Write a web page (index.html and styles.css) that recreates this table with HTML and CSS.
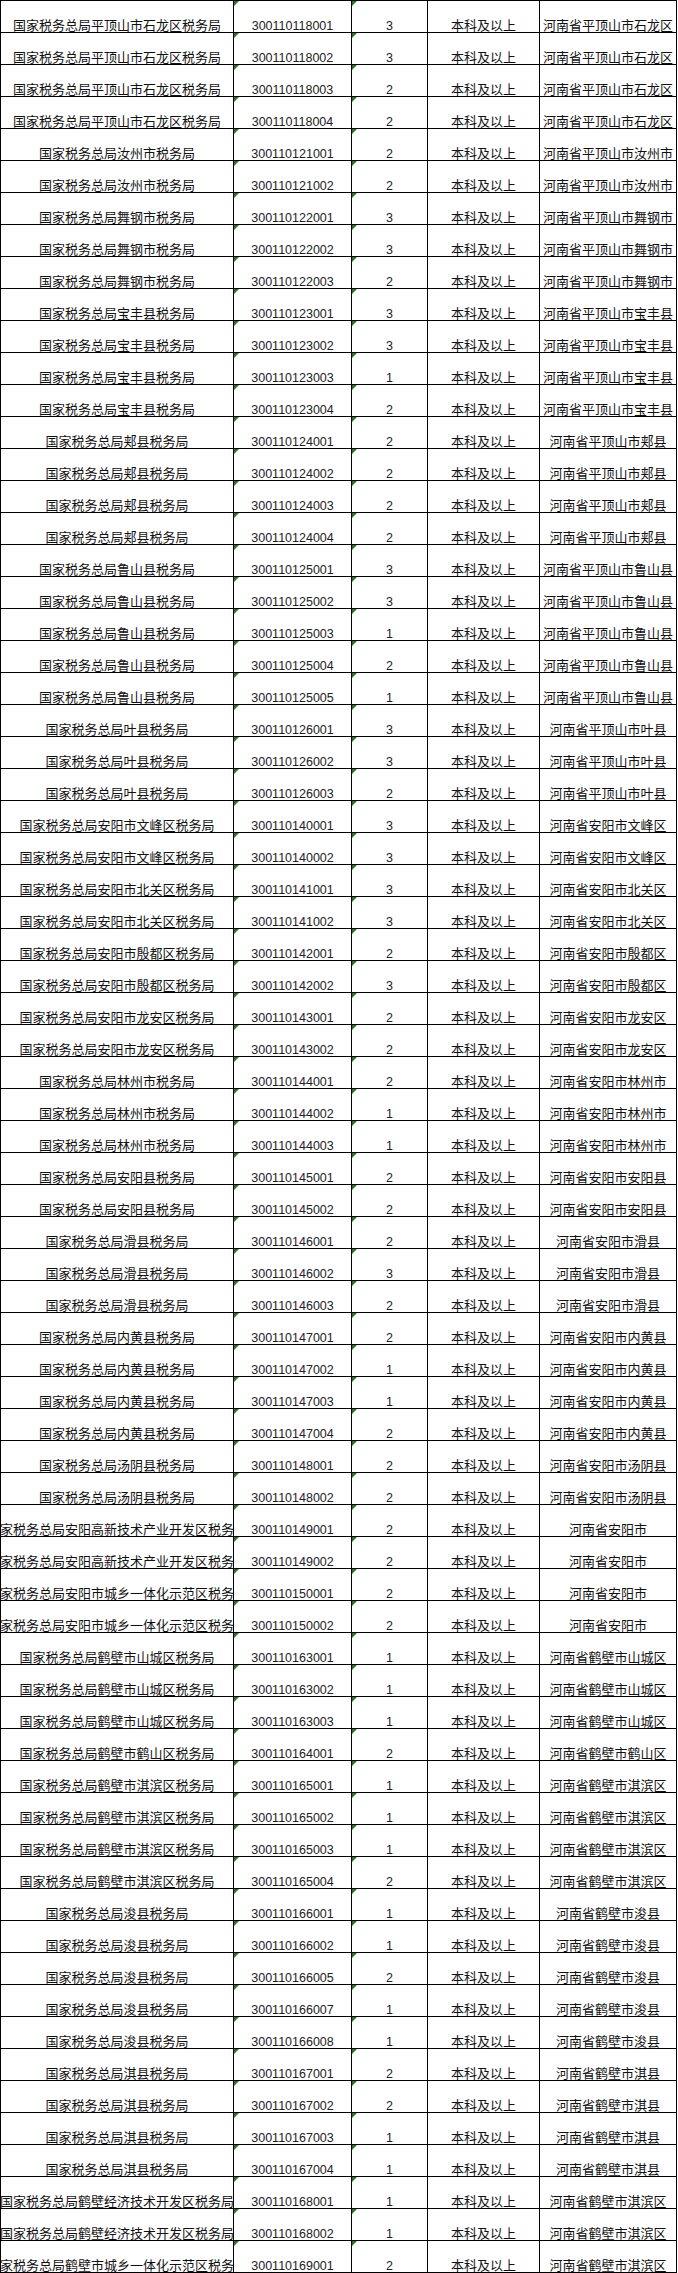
FILE: index.html
```html
<!DOCTYPE html>
<html lang="zh-CN">
<head>
<meta charset="utf-8">
<title>职位表</title>
<link rel="stylesheet" href="styles.css">
</head>
<body>
<div class="sheet">
<div class="row"><div class="c c1"><span>国家税务总局平顶山市石龙区税务局</span></div><div class="c c2 mark"><span>300110118001</span></div><div class="c c3 mark"><span>3</span></div><div class="c c4"><span>本科及以上</span></div><div class="c c5"><span>河南省平顶山市石龙区</span></div></div>
<div class="row"><div class="c c1"><span>国家税务总局平顶山市石龙区税务局</span></div><div class="c c2 mark"><span>300110118002</span></div><div class="c c3 mark"><span>3</span></div><div class="c c4"><span>本科及以上</span></div><div class="c c5"><span>河南省平顶山市石龙区</span></div></div>
<div class="row"><div class="c c1"><span>国家税务总局平顶山市石龙区税务局</span></div><div class="c c2 mark"><span>300110118003</span></div><div class="c c3 mark"><span>2</span></div><div class="c c4"><span>本科及以上</span></div><div class="c c5"><span>河南省平顶山市石龙区</span></div></div>
<div class="row"><div class="c c1"><span>国家税务总局平顶山市石龙区税务局</span></div><div class="c c2 mark"><span>300110118004</span></div><div class="c c3 mark"><span>2</span></div><div class="c c4"><span>本科及以上</span></div><div class="c c5"><span>河南省平顶山市石龙区</span></div></div>
<div class="row"><div class="c c1"><span>国家税务总局汝州市税务局</span></div><div class="c c2 mark"><span>300110121001</span></div><div class="c c3 mark"><span>2</span></div><div class="c c4"><span>本科及以上</span></div><div class="c c5"><span>河南省平顶山市汝州市</span></div></div>
<div class="row"><div class="c c1"><span>国家税务总局汝州市税务局</span></div><div class="c c2 mark"><span>300110121002</span></div><div class="c c3 mark"><span>2</span></div><div class="c c4"><span>本科及以上</span></div><div class="c c5"><span>河南省平顶山市汝州市</span></div></div>
<div class="row"><div class="c c1"><span>国家税务总局舞钢市税务局</span></div><div class="c c2 mark"><span>300110122001</span></div><div class="c c3 mark"><span>3</span></div><div class="c c4"><span>本科及以上</span></div><div class="c c5"><span>河南省平顶山市舞钢市</span></div></div>
<div class="row"><div class="c c1"><span>国家税务总局舞钢市税务局</span></div><div class="c c2 mark"><span>300110122002</span></div><div class="c c3 mark"><span>3</span></div><div class="c c4"><span>本科及以上</span></div><div class="c c5"><span>河南省平顶山市舞钢市</span></div></div>
<div class="row"><div class="c c1"><span>国家税务总局舞钢市税务局</span></div><div class="c c2 mark"><span>300110122003</span></div><div class="c c3 mark"><span>2</span></div><div class="c c4"><span>本科及以上</span></div><div class="c c5"><span>河南省平顶山市舞钢市</span></div></div>
<div class="row"><div class="c c1"><span>国家税务总局宝丰县税务局</span></div><div class="c c2 mark"><span>300110123001</span></div><div class="c c3 mark"><span>3</span></div><div class="c c4"><span>本科及以上</span></div><div class="c c5"><span>河南省平顶山市宝丰县</span></div></div>
<div class="row"><div class="c c1"><span>国家税务总局宝丰县税务局</span></div><div class="c c2 mark"><span>300110123002</span></div><div class="c c3 mark"><span>3</span></div><div class="c c4"><span>本科及以上</span></div><div class="c c5"><span>河南省平顶山市宝丰县</span></div></div>
<div class="row"><div class="c c1"><span>国家税务总局宝丰县税务局</span></div><div class="c c2 mark"><span>300110123003</span></div><div class="c c3 mark"><span>1</span></div><div class="c c4"><span>本科及以上</span></div><div class="c c5"><span>河南省平顶山市宝丰县</span></div></div>
<div class="row"><div class="c c1"><span>国家税务总局宝丰县税务局</span></div><div class="c c2 mark"><span>300110123004</span></div><div class="c c3 mark"><span>2</span></div><div class="c c4"><span>本科及以上</span></div><div class="c c5"><span>河南省平顶山市宝丰县</span></div></div>
<div class="row"><div class="c c1"><span>国家税务总局郏县税务局</span></div><div class="c c2 mark"><span>300110124001</span></div><div class="c c3 mark"><span>2</span></div><div class="c c4"><span>本科及以上</span></div><div class="c c5"><span>河南省平顶山市郏县</span></div></div>
<div class="row"><div class="c c1"><span>国家税务总局郏县税务局</span></div><div class="c c2 mark"><span>300110124002</span></div><div class="c c3 mark"><span>2</span></div><div class="c c4"><span>本科及以上</span></div><div class="c c5"><span>河南省平顶山市郏县</span></div></div>
<div class="row"><div class="c c1"><span>国家税务总局郏县税务局</span></div><div class="c c2 mark"><span>300110124003</span></div><div class="c c3 mark"><span>2</span></div><div class="c c4"><span>本科及以上</span></div><div class="c c5"><span>河南省平顶山市郏县</span></div></div>
<div class="row"><div class="c c1"><span>国家税务总局郏县税务局</span></div><div class="c c2 mark"><span>300110124004</span></div><div class="c c3 mark"><span>2</span></div><div class="c c4"><span>本科及以上</span></div><div class="c c5"><span>河南省平顶山市郏县</span></div></div>
<div class="row"><div class="c c1"><span>国家税务总局鲁山县税务局</span></div><div class="c c2 mark"><span>300110125001</span></div><div class="c c3 mark"><span>3</span></div><div class="c c4"><span>本科及以上</span></div><div class="c c5"><span>河南省平顶山市鲁山县</span></div></div>
<div class="row"><div class="c c1"><span>国家税务总局鲁山县税务局</span></div><div class="c c2 mark"><span>300110125002</span></div><div class="c c3 mark"><span>3</span></div><div class="c c4"><span>本科及以上</span></div><div class="c c5"><span>河南省平顶山市鲁山县</span></div></div>
<div class="row"><div class="c c1"><span>国家税务总局鲁山县税务局</span></div><div class="c c2 mark"><span>300110125003</span></div><div class="c c3 mark"><span>1</span></div><div class="c c4"><span>本科及以上</span></div><div class="c c5"><span>河南省平顶山市鲁山县</span></div></div>
<div class="row"><div class="c c1"><span>国家税务总局鲁山县税务局</span></div><div class="c c2 mark"><span>300110125004</span></div><div class="c c3 mark"><span>2</span></div><div class="c c4"><span>本科及以上</span></div><div class="c c5"><span>河南省平顶山市鲁山县</span></div></div>
<div class="row"><div class="c c1"><span>国家税务总局鲁山县税务局</span></div><div class="c c2 mark"><span>300110125005</span></div><div class="c c3 mark"><span>1</span></div><div class="c c4"><span>本科及以上</span></div><div class="c c5"><span>河南省平顶山市鲁山县</span></div></div>
<div class="row"><div class="c c1"><span>国家税务总局叶县税务局</span></div><div class="c c2 mark"><span>300110126001</span></div><div class="c c3 mark"><span>3</span></div><div class="c c4"><span>本科及以上</span></div><div class="c c5"><span>河南省平顶山市叶县</span></div></div>
<div class="row"><div class="c c1"><span>国家税务总局叶县税务局</span></div><div class="c c2 mark"><span>300110126002</span></div><div class="c c3 mark"><span>3</span></div><div class="c c4"><span>本科及以上</span></div><div class="c c5"><span>河南省平顶山市叶县</span></div></div>
<div class="row"><div class="c c1"><span>国家税务总局叶县税务局</span></div><div class="c c2 mark"><span>300110126003</span></div><div class="c c3 mark"><span>2</span></div><div class="c c4"><span>本科及以上</span></div><div class="c c5"><span>河南省平顶山市叶县</span></div></div>
<div class="row"><div class="c c1"><span>国家税务总局安阳市文峰区税务局</span></div><div class="c c2 mark"><span>300110140001</span></div><div class="c c3 mark"><span>3</span></div><div class="c c4"><span>本科及以上</span></div><div class="c c5"><span>河南省安阳市文峰区</span></div></div>
<div class="row"><div class="c c1"><span>国家税务总局安阳市文峰区税务局</span></div><div class="c c2 mark"><span>300110140002</span></div><div class="c c3 mark"><span>3</span></div><div class="c c4"><span>本科及以上</span></div><div class="c c5"><span>河南省安阳市文峰区</span></div></div>
<div class="row"><div class="c c1"><span>国家税务总局安阳市北关区税务局</span></div><div class="c c2 mark"><span>300110141001</span></div><div class="c c3 mark"><span>3</span></div><div class="c c4"><span>本科及以上</span></div><div class="c c5"><span>河南省安阳市北关区</span></div></div>
<div class="row"><div class="c c1"><span>国家税务总局安阳市北关区税务局</span></div><div class="c c2 mark"><span>300110141002</span></div><div class="c c3 mark"><span>3</span></div><div class="c c4"><span>本科及以上</span></div><div class="c c5"><span>河南省安阳市北关区</span></div></div>
<div class="row"><div class="c c1"><span>国家税务总局安阳市殷都区税务局</span></div><div class="c c2 mark"><span>300110142001</span></div><div class="c c3 mark"><span>2</span></div><div class="c c4"><span>本科及以上</span></div><div class="c c5"><span>河南省安阳市殷都区</span></div></div>
<div class="row"><div class="c c1"><span>国家税务总局安阳市殷都区税务局</span></div><div class="c c2 mark"><span>300110142002</span></div><div class="c c3 mark"><span>3</span></div><div class="c c4"><span>本科及以上</span></div><div class="c c5"><span>河南省安阳市殷都区</span></div></div>
<div class="row"><div class="c c1"><span>国家税务总局安阳市龙安区税务局</span></div><div class="c c2 mark"><span>300110143001</span></div><div class="c c3 mark"><span>2</span></div><div class="c c4"><span>本科及以上</span></div><div class="c c5"><span>河南省安阳市龙安区</span></div></div>
<div class="row"><div class="c c1"><span>国家税务总局安阳市龙安区税务局</span></div><div class="c c2 mark"><span>300110143002</span></div><div class="c c3 mark"><span>2</span></div><div class="c c4"><span>本科及以上</span></div><div class="c c5"><span>河南省安阳市龙安区</span></div></div>
<div class="row"><div class="c c1"><span>国家税务总局林州市税务局</span></div><div class="c c2 mark"><span>300110144001</span></div><div class="c c3 mark"><span>2</span></div><div class="c c4"><span>本科及以上</span></div><div class="c c5"><span>河南省安阳市林州市</span></div></div>
<div class="row"><div class="c c1"><span>国家税务总局林州市税务局</span></div><div class="c c2 mark"><span>300110144002</span></div><div class="c c3 mark"><span>1</span></div><div class="c c4"><span>本科及以上</span></div><div class="c c5"><span>河南省安阳市林州市</span></div></div>
<div class="row"><div class="c c1"><span>国家税务总局林州市税务局</span></div><div class="c c2 mark"><span>300110144003</span></div><div class="c c3 mark"><span>1</span></div><div class="c c4"><span>本科及以上</span></div><div class="c c5"><span>河南省安阳市林州市</span></div></div>
<div class="row"><div class="c c1"><span>国家税务总局安阳县税务局</span></div><div class="c c2 mark"><span>300110145001</span></div><div class="c c3 mark"><span>2</span></div><div class="c c4"><span>本科及以上</span></div><div class="c c5"><span>河南省安阳市安阳县</span></div></div>
<div class="row"><div class="c c1"><span>国家税务总局安阳县税务局</span></div><div class="c c2 mark"><span>300110145002</span></div><div class="c c3 mark"><span>2</span></div><div class="c c4"><span>本科及以上</span></div><div class="c c5"><span>河南省安阳市安阳县</span></div></div>
<div class="row"><div class="c c1"><span>国家税务总局滑县税务局</span></div><div class="c c2 mark"><span>300110146001</span></div><div class="c c3 mark"><span>2</span></div><div class="c c4"><span>本科及以上</span></div><div class="c c5"><span>河南省安阳市滑县</span></div></div>
<div class="row"><div class="c c1"><span>国家税务总局滑县税务局</span></div><div class="c c2 mark"><span>300110146002</span></div><div class="c c3 mark"><span>3</span></div><div class="c c4"><span>本科及以上</span></div><div class="c c5"><span>河南省安阳市滑县</span></div></div>
<div class="row"><div class="c c1"><span>国家税务总局滑县税务局</span></div><div class="c c2 mark"><span>300110146003</span></div><div class="c c3 mark"><span>2</span></div><div class="c c4"><span>本科及以上</span></div><div class="c c5"><span>河南省安阳市滑县</span></div></div>
<div class="row"><div class="c c1"><span>国家税务总局内黄县税务局</span></div><div class="c c2 mark"><span>300110147001</span></div><div class="c c3 mark"><span>2</span></div><div class="c c4"><span>本科及以上</span></div><div class="c c5"><span>河南省安阳市内黄县</span></div></div>
<div class="row"><div class="c c1"><span>国家税务总局内黄县税务局</span></div><div class="c c2 mark"><span>300110147002</span></div><div class="c c3 mark"><span>1</span></div><div class="c c4"><span>本科及以上</span></div><div class="c c5"><span>河南省安阳市内黄县</span></div></div>
<div class="row"><div class="c c1"><span>国家税务总局内黄县税务局</span></div><div class="c c2 mark"><span>300110147003</span></div><div class="c c3 mark"><span>1</span></div><div class="c c4"><span>本科及以上</span></div><div class="c c5"><span>河南省安阳市内黄县</span></div></div>
<div class="row"><div class="c c1"><span>国家税务总局内黄县税务局</span></div><div class="c c2 mark"><span>300110147004</span></div><div class="c c3 mark"><span>2</span></div><div class="c c4"><span>本科及以上</span></div><div class="c c5"><span>河南省安阳市内黄县</span></div></div>
<div class="row"><div class="c c1"><span>国家税务总局汤阴县税务局</span></div><div class="c c2 mark"><span>300110148001</span></div><div class="c c3 mark"><span>2</span></div><div class="c c4"><span>本科及以上</span></div><div class="c c5"><span>河南省安阳市汤阴县</span></div></div>
<div class="row"><div class="c c1"><span>国家税务总局汤阴县税务局</span></div><div class="c c2 mark"><span>300110148002</span></div><div class="c c3 mark"><span>2</span></div><div class="c c4"><span>本科及以上</span></div><div class="c c5"><span>河南省安阳市汤阴县</span></div></div>
<div class="row"><div class="c c1"><span>国家税务总局安阳高新技术产业开发区税务局</span></div><div class="c c2 mark"><span>300110149001</span></div><div class="c c3 mark"><span>2</span></div><div class="c c4"><span>本科及以上</span></div><div class="c c5"><span>河南省安阳市</span></div></div>
<div class="row"><div class="c c1"><span>国家税务总局安阳高新技术产业开发区税务局</span></div><div class="c c2 mark"><span>300110149002</span></div><div class="c c3 mark"><span>2</span></div><div class="c c4"><span>本科及以上</span></div><div class="c c5"><span>河南省安阳市</span></div></div>
<div class="row"><div class="c c1"><span>国家税务总局安阳市城乡一体化示范区税务局</span></div><div class="c c2 mark"><span>300110150001</span></div><div class="c c3 mark"><span>2</span></div><div class="c c4"><span>本科及以上</span></div><div class="c c5"><span>河南省安阳市</span></div></div>
<div class="row"><div class="c c1"><span>国家税务总局安阳市城乡一体化示范区税务局</span></div><div class="c c2 mark"><span>300110150002</span></div><div class="c c3 mark"><span>2</span></div><div class="c c4"><span>本科及以上</span></div><div class="c c5"><span>河南省安阳市</span></div></div>
<div class="row"><div class="c c1"><span>国家税务总局鹤壁市山城区税务局</span></div><div class="c c2 mark"><span>300110163001</span></div><div class="c c3 mark"><span>1</span></div><div class="c c4"><span>本科及以上</span></div><div class="c c5"><span>河南省鹤壁市山城区</span></div></div>
<div class="row"><div class="c c1"><span>国家税务总局鹤壁市山城区税务局</span></div><div class="c c2 mark"><span>300110163002</span></div><div class="c c3 mark"><span>1</span></div><div class="c c4"><span>本科及以上</span></div><div class="c c5"><span>河南省鹤壁市山城区</span></div></div>
<div class="row"><div class="c c1"><span>国家税务总局鹤壁市山城区税务局</span></div><div class="c c2 mark"><span>300110163003</span></div><div class="c c3 mark"><span>1</span></div><div class="c c4"><span>本科及以上</span></div><div class="c c5"><span>河南省鹤壁市山城区</span></div></div>
<div class="row"><div class="c c1"><span>国家税务总局鹤壁市鹤山区税务局</span></div><div class="c c2 mark"><span>300110164001</span></div><div class="c c3 mark"><span>2</span></div><div class="c c4"><span>本科及以上</span></div><div class="c c5"><span>河南省鹤壁市鹤山区</span></div></div>
<div class="row"><div class="c c1"><span>国家税务总局鹤壁市淇滨区税务局</span></div><div class="c c2 mark"><span>300110165001</span></div><div class="c c3 mark"><span>1</span></div><div class="c c4"><span>本科及以上</span></div><div class="c c5"><span>河南省鹤壁市淇滨区</span></div></div>
<div class="row"><div class="c c1"><span>国家税务总局鹤壁市淇滨区税务局</span></div><div class="c c2 mark"><span>300110165002</span></div><div class="c c3 mark"><span>1</span></div><div class="c c4"><span>本科及以上</span></div><div class="c c5"><span>河南省鹤壁市淇滨区</span></div></div>
<div class="row"><div class="c c1"><span>国家税务总局鹤壁市淇滨区税务局</span></div><div class="c c2 mark"><span>300110165003</span></div><div class="c c3 mark"><span>1</span></div><div class="c c4"><span>本科及以上</span></div><div class="c c5"><span>河南省鹤壁市淇滨区</span></div></div>
<div class="row"><div class="c c1"><span>国家税务总局鹤壁市淇滨区税务局</span></div><div class="c c2 mark"><span>300110165004</span></div><div class="c c3 mark"><span>2</span></div><div class="c c4"><span>本科及以上</span></div><div class="c c5"><span>河南省鹤壁市淇滨区</span></div></div>
<div class="row"><div class="c c1"><span>国家税务总局浚县税务局</span></div><div class="c c2 mark"><span>300110166001</span></div><div class="c c3 mark"><span>1</span></div><div class="c c4"><span>本科及以上</span></div><div class="c c5"><span>河南省鹤壁市浚县</span></div></div>
<div class="row"><div class="c c1"><span>国家税务总局浚县税务局</span></div><div class="c c2 mark"><span>300110166002</span></div><div class="c c3 mark"><span>1</span></div><div class="c c4"><span>本科及以上</span></div><div class="c c5"><span>河南省鹤壁市浚县</span></div></div>
<div class="row"><div class="c c1"><span>国家税务总局浚县税务局</span></div><div class="c c2 mark"><span>300110166005</span></div><div class="c c3 mark"><span>2</span></div><div class="c c4"><span>本科及以上</span></div><div class="c c5"><span>河南省鹤壁市浚县</span></div></div>
<div class="row"><div class="c c1"><span>国家税务总局浚县税务局</span></div><div class="c c2 mark"><span>300110166007</span></div><div class="c c3 mark"><span>1</span></div><div class="c c4"><span>本科及以上</span></div><div class="c c5"><span>河南省鹤壁市浚县</span></div></div>
<div class="row"><div class="c c1"><span>国家税务总局浚县税务局</span></div><div class="c c2 mark"><span>300110166008</span></div><div class="c c3 mark"><span>1</span></div><div class="c c4"><span>本科及以上</span></div><div class="c c5"><span>河南省鹤壁市浚县</span></div></div>
<div class="row"><div class="c c1"><span>国家税务总局淇县税务局</span></div><div class="c c2 mark"><span>300110167001</span></div><div class="c c3 mark"><span>2</span></div><div class="c c4"><span>本科及以上</span></div><div class="c c5"><span>河南省鹤壁市淇县</span></div></div>
<div class="row"><div class="c c1"><span>国家税务总局淇县税务局</span></div><div class="c c2 mark"><span>300110167002</span></div><div class="c c3 mark"><span>2</span></div><div class="c c4"><span>本科及以上</span></div><div class="c c5"><span>河南省鹤壁市淇县</span></div></div>
<div class="row"><div class="c c1"><span>国家税务总局淇县税务局</span></div><div class="c c2 mark"><span>300110167003</span></div><div class="c c3 mark"><span>1</span></div><div class="c c4"><span>本科及以上</span></div><div class="c c5"><span>河南省鹤壁市淇县</span></div></div>
<div class="row"><div class="c c1"><span>国家税务总局淇县税务局</span></div><div class="c c2 mark"><span>300110167004</span></div><div class="c c3 mark"><span>1</span></div><div class="c c4"><span>本科及以上</span></div><div class="c c5"><span>河南省鹤壁市淇县</span></div></div>
<div class="row"><div class="c c1"><span>国家税务总局鹤壁经济技术开发区税务局</span></div><div class="c c2 mark"><span>300110168001</span></div><div class="c c3 mark"><span>1</span></div><div class="c c4"><span>本科及以上</span></div><div class="c c5"><span>河南省鹤壁市淇滨区</span></div></div>
<div class="row"><div class="c c1"><span>国家税务总局鹤壁经济技术开发区税务局</span></div><div class="c c2 mark"><span>300110168002</span></div><div class="c c3 mark"><span>1</span></div><div class="c c4"><span>本科及以上</span></div><div class="c c5"><span>河南省鹤壁市淇滨区</span></div></div>
<div class="row"><div class="c c1"><span>国家税务总局鹤壁市城乡一体化示范区税务局</span></div><div class="c c2 mark"><span>300110169001</span></div><div class="c c3 mark"><span>2</span></div><div class="c c4"><span>本科及以上</span></div><div class="c c5"><span>河南省鹤壁市淇滨区</span></div></div>
</div>
</body>
</html>
```
FILE: styles.css
```css
html, body {
  margin: 0;
  padding: 0;
  background: #fff;
}

.sheet {
  display: flex;
  flex-direction: column;
  gap: 1px;
  width: max-content;
  background: #000;
  border: 1px solid #000;
  font-family: "Liberation Sans", "Noto Sans CJK SC", sans-serif;
  color: #111;
}

.row {
  display: grid;
  grid-template-columns: 232px 117px 75px 111px 136px;
  column-gap: 1px;
  height: 31px;
}

.c {
  background: #fff;
  display: flex;
  align-items: flex-end;
  justify-content: center;
  overflow: hidden;
  white-space: nowrap;
  position: relative;
}

.c span {
  flex-shrink: 0;
  font-size: 13px;
  line-height: 12px;
}

.c2 span,
.c3 span {
  font-size: 12.5px;
  color: #222;
}

.mark::before {
  content: "";
  position: absolute;
  left: 0;
  top: 0;
  width: 0;
  height: 0;
  border-top: 5px solid #1e7b1e;
  border-right: 5px solid transparent;
}
```
